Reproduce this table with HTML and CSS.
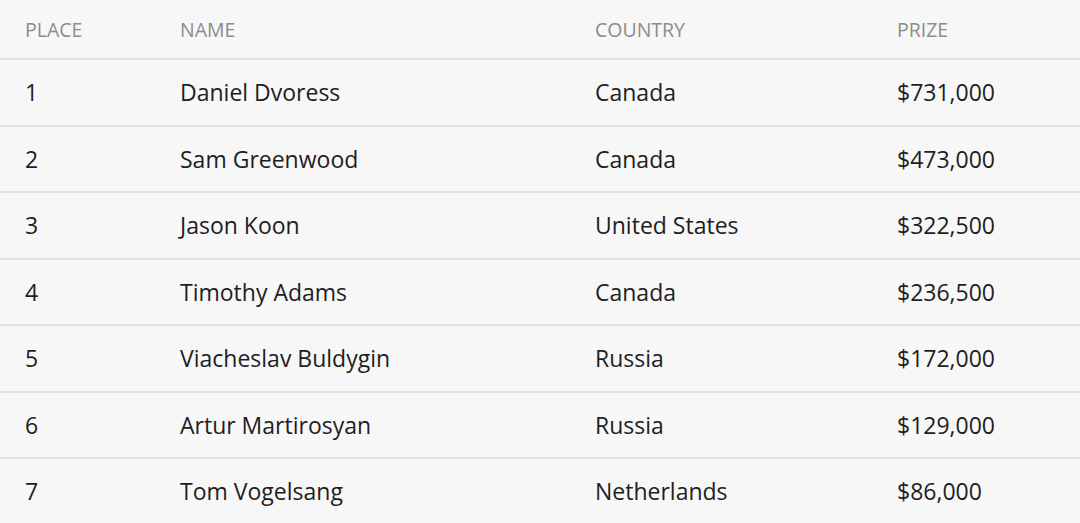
FILE: index.html
```html
<!DOCTYPE html>
<html>
<head>
<meta charset="utf-8">
<link rel="stylesheet" href="styles.css">
</head>
<body>
<table class="results">
  <thead>
    <tr><th>Place</th><th>Name</th><th>Country</th><th>Prize</th></tr>
  </thead>
  <tbody>
    <tr><td>1</td><td>Daniel Dvoress</td><td>Canada</td><td>$731,000</td></tr>
    <tr><td>2</td><td>Sam Greenwood</td><td>Canada</td><td>$473,000</td></tr>
    <tr><td>3</td><td>Jason Koon</td><td>United States</td><td>$322,500</td></tr>
    <tr><td>4</td><td>Timothy Adams</td><td>Canada</td><td>$236,500</td></tr>
    <tr><td>5</td><td>Viacheslav Buldygin</td><td>Russia</td><td>$172,000</td></tr>
    <tr><td>6</td><td>Artur Martirosyan</td><td>Russia</td><td>$129,000</td></tr>
    <tr><td>7</td><td>Tom Vogelsang</td><td>Netherlands</td><td>$86,000</td></tr>
  </tbody>
</table>
</body>
</html>
```
FILE: styles.css
```css
html, body {
  margin: 0;
  padding: 0;
  background: #f7f7f7;
}
body {
  font-family: "Open Sans", "Liberation Sans", sans-serif;
  color: #222;
}
.results {
  width: 100%;
  border-collapse: collapse;
  table-layout: fixed;
}
.results th, .results td {
  text-align: left;
  padding: 0 0 0 25px;
  font-weight: 400;
}
.results th:nth-child(1) { width: 130px; }
.results th:nth-child(2) { width: 390px; }
.results th:nth-child(3) { width: 277px; }
.results th {
  height: 58px;
  font-size: 19.5px;
  color: #8c8c8c;
  text-transform: uppercase;
  border-bottom: 2px solid #e3e3e3;
}
.results td {
  height: 64.5px;
  font-size: 23px;
  color: #1e1e1e;
  border-bottom: 2px solid #e3e3e3;
}
.results tbody tr:last-child td {
  border-bottom: none;
}
```
